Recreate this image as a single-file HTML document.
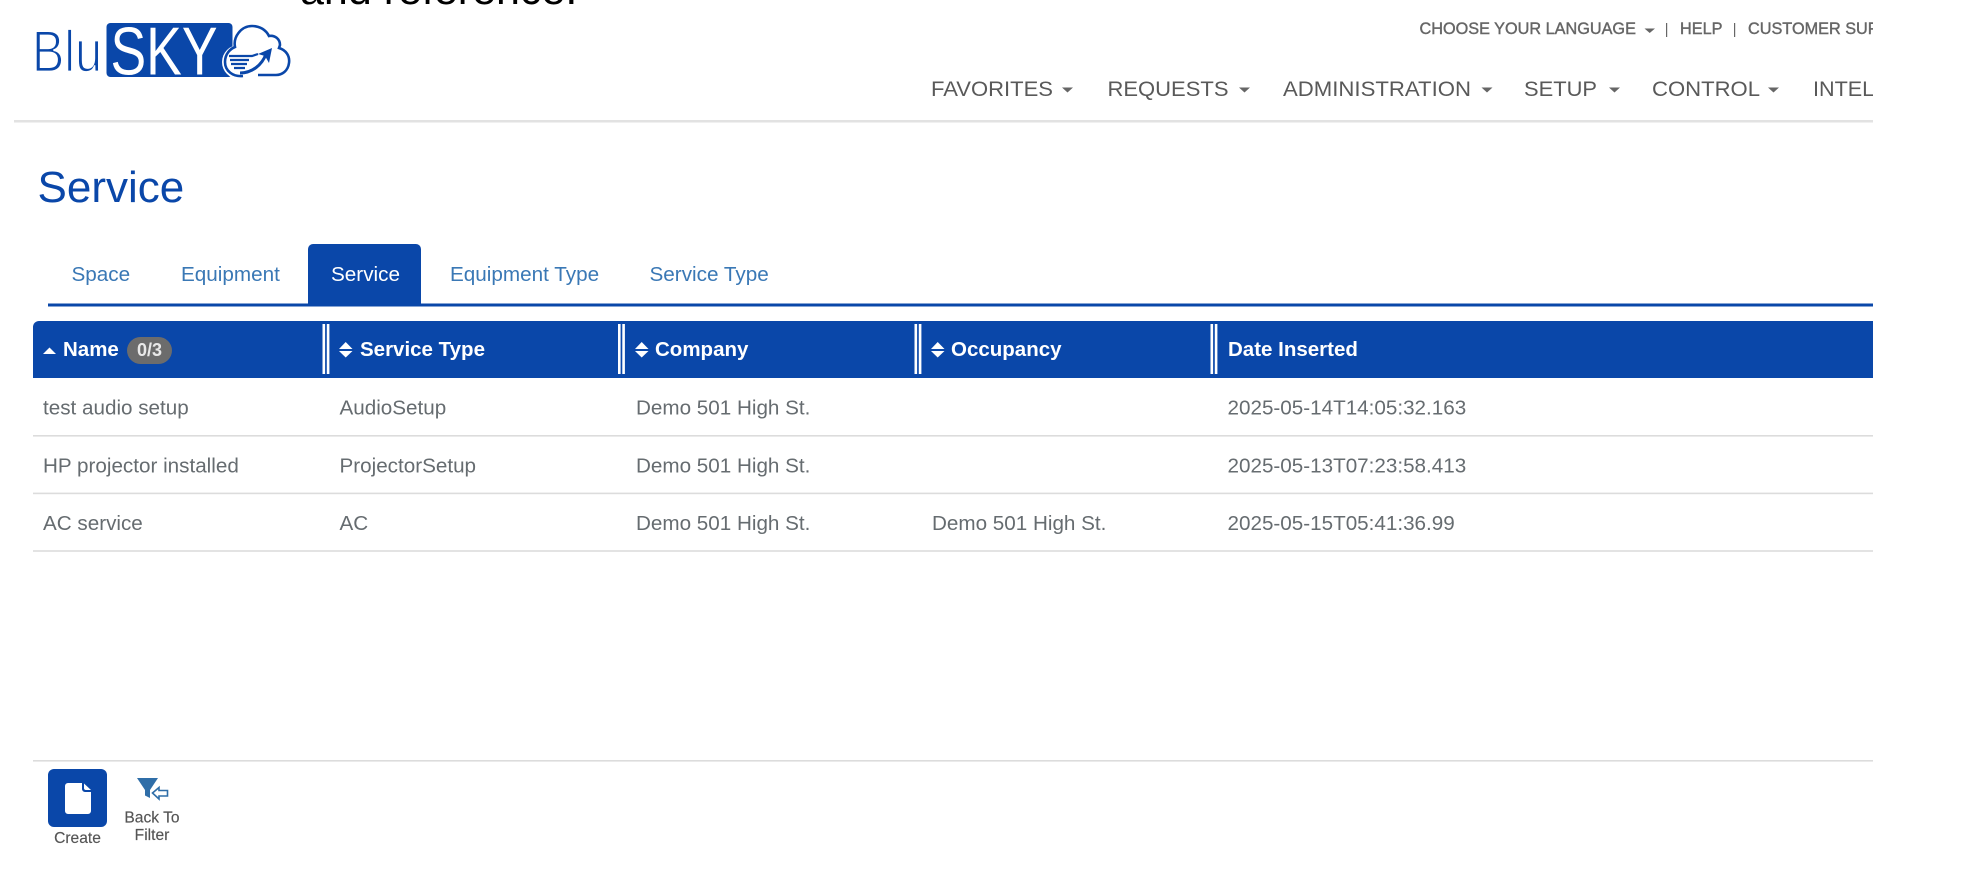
<!DOCTYPE html>
<html lang="en">
<head>
<meta charset="utf-8">
<title>Service</title>
<style>
html,body{margin:0;padding:0;background:#fff;width:1980px;height:892px;overflow:hidden}
svg{display:block;filter:blur(.3px)}
text{font-family:"Liberation Sans",sans-serif}
.nav{font-size:21.6px;fill:#595959}
.top{font-size:16.25px;fill:#666;stroke:#666;stroke-width:.4px}
.tab{font-size:20.7px;fill:#3a78b5}
.th{font-size:20.5px;font-weight:bold;fill:#fff}
.td{font-size:20.65px;fill:#666c70}
.lbl{font-size:15.6px;fill:#555;stroke:#555;stroke-width:.15px;text-anchor:middle}
</style>
</head>
<body>
<svg width="1980" height="892" viewBox="0 0 1980 892" xmlns="http://www.w3.org/2000/svg">
<defs>
<clipPath id="c"><rect x="0" y="0" width="1873" height="892"/></clipPath>
<clipPath id="h"><path d="M39 321H1873V378H33V327a6 6 0 0 1 6-6Z"/></clipPath>
</defs>
<rect width="1980" height="892" fill="#fff"/>

<text x="300" y="4" font-size="43" fill="#000">and reference.</text>

<!-- logo -->
<text x="32" y="71.5" font-size="58" fill="#0a47a9" stroke="#fff" stroke-width="1.7" textLength="70" lengthAdjust="spacingAndGlyphs">Blu</text>
<rect x="106.5" y="23" width="126" height="54" rx="4" fill="#0a47a9"/>
<text x="110.5" y="74.5" font-size="68" fill="#fff" textLength="107" lengthAdjust="spacingAndGlyphs">SKY</text>
<circle cx="239" cy="62" r="17" fill="#fff"/>
<circle cx="251" cy="38" r="16" fill="#fff"/>
<path d="M243 76C233 77 225 71 225 62C225 54 230 49 235 47C233 37 241 26 252 26C260 26 266 30 269 36C275 35 280 39 280 45L279 48C286 50 290 56 289 63C288 71 282 75 276 75H258" fill="none" stroke="#0a47a9" stroke-width="2.6"/>
<path d="M229 56H252L258 54M230 60H249M231 64H247M234 68H245" fill="none" stroke="#0a47a9" stroke-width="2.2"/>
<path d="M240 73C252 73 262 65 266 54" fill="none" stroke="#0a47a9" stroke-width="3"/>
<polygon points="272,48 269,63 265,56 258,54" fill="#0a47a9"/>

<g clip-path="url(#c)">
<!-- top bar -->
<text class="top" x="1419.5" y="34">CHOOSE YOUR LANGUAGE</text>
<polygon points="1644.5,28.5 1655,28.5 1649.7,33" fill="#666"/>
<rect x="1666" y="23" width="1.2" height="14" fill="#666"/>
<text class="top" x="1680" y="34">HELP</text>
<rect x="1734" y="23" width="1.2" height="14" fill="#666"/>
<text class="top" x="1748" y="34">CUSTOMER SUPPORT</text>

<!-- nav -->
<text class="nav" x="931" y="96" textLength="122" lengthAdjust="spacingAndGlyphs">FAVORITES</text>
<polygon points="1062,87.5 1073,87.5 1067.5,92.5" fill="#666"/>
<text class="nav" x="1107.5" y="96" textLength="121" lengthAdjust="spacingAndGlyphs">REQUESTS</text>
<polygon points="1239,87.5 1250,87.5 1244.5,92.5" fill="#666"/>
<text class="nav" x="1283" y="96" textLength="188" lengthAdjust="spacingAndGlyphs">ADMINISTRATION</text>
<polygon points="1481.5,87.5 1492.5,87.5 1487,92.5" fill="#666"/>
<text class="nav" x="1524" y="96" textLength="73" lengthAdjust="spacingAndGlyphs">SETUP</text>
<polygon points="1609,87.5 1620,87.5 1614.5,92.5" fill="#666"/>
<text class="nav" x="1652" y="96" textLength="108" lengthAdjust="spacingAndGlyphs">CONTROL</text>
<polygon points="1768,87.5 1779,87.5 1773.5,92.5" fill="#666"/>
<text class="nav" x="1813" y="96">INTELLIGENCE</text>

<rect x="14" y="120" width="1859" height="2.5" fill="#e2e2e2"/>

<!-- title -->
<text x="37.5" y="202" font-size="44" fill="#0a47a9">Service</text>

<!-- tabs -->
<rect x="48" y="303.5" width="1825" height="3" fill="#0a47a9"/>
<path d="M308 306V249a5 5 0 0 1 5-5H416a5 5 0 0 1 5 5V306Z" fill="#0a47a9"/>
<text class="tab" x="71.5" y="281">Space</text>
<text class="tab" x="181" y="281">Equipment</text>
<text class="tab" x="331" y="281" style="fill:#fff">Service</text>
<text class="tab" x="450" y="281">Equipment Type</text>
<text class="tab" x="649.5" y="281">Service Type</text>

<!-- table header -->
<rect x="33" y="321" width="1840" height="57" fill="#0a47a9" clip-path="url(#h)"/>
<polygon points="43,354 56,354 49.5,347.5" fill="#fff"/>
<text class="th" x="63" y="356">Name</text>
<rect x="127" y="337" width="45" height="27" rx="13.5" fill="#6c6c6c"/>
<text x="137" y="356" font-size="18" font-weight="bold" fill="#e8e8e8">0/3</text>

<g fill="#fff">
<rect x="322.5" y="324" width="2.6" height="50"/><rect x="326.8" y="324" width="2.6" height="50"/>
<rect x="618" y="324" width="2.6" height="50"/><rect x="622.3" y="324" width="2.6" height="50"/>
<rect x="914.5" y="324" width="2.6" height="50"/><rect x="918.8" y="324" width="2.6" height="50"/>
<rect x="1210.5" y="324" width="2.6" height="50"/><rect x="1214.8" y="324" width="2.6" height="50"/>
<polygon points="339,349 352.5,349 345.7,342"/><polygon points="339,351 352.5,351 345.7,357.5"/>
<polygon points="635,349 648.5,349 641.7,342"/><polygon points="635,351 648.5,351 641.7,357.5"/>
<polygon points="931,349 944.5,349 937.7,342"/><polygon points="931,351 944.5,351 937.7,357.5"/>
</g>
<text class="th" x="360" y="356">Service Type</text>
<text class="th" x="655" y="356">Company</text>
<text class="th" x="951" y="356">Occupancy</text>
<text class="th" x="1228" y="356">Date Inserted</text>

<!-- rows -->
<text class="td" x="43" y="414.5">test audio setup</text>
<text class="td" x="339.5" y="414.5">AudioSetup</text>
<text class="td" x="636" y="414.5">Demo 501 High St.</text>
<text class="td" x="1227.5" y="414.5">2025-05-14T14:05:32.163</text>
<rect x="33" y="435" width="1840" height="1.6" fill="#dcdcdc"/>

<text class="td" x="43" y="472.3">HP projector installed</text>
<text class="td" x="339.5" y="472.3">ProjectorSetup</text>
<text class="td" x="636" y="472.3">Demo 501 High St.</text>
<text class="td" x="1227.5" y="472.3">2025-05-13T07:23:58.413</text>
<rect x="33" y="492.6" width="1840" height="1.6" fill="#dcdcdc"/>

<text class="td" x="43" y="530">AC service</text>
<text class="td" x="339.5" y="530">AC</text>
<text class="td" x="636" y="530">Demo 501 High St.</text>
<text class="td" x="932" y="530">Demo 501 High St.</text>
<text class="td" x="1227.5" y="530">2025-05-15T05:41:36.99</text>
<rect x="33" y="550.2" width="1840" height="1.6" fill="#dcdcdc"/>

<!-- footer -->
<rect x="33" y="760" width="1840" height="1.6" fill="#dcdcdc"/>
</g>

<rect x="48" y="769" width="59" height="58" rx="6" fill="#0a47a9"/>
<path d="M68 783H82V789a3 3 0 0 0 3 3H91V811a3 3 0 0 1-3 3H68a3 3 0 0 1-3-3V786a3 3 0 0 1 3-3Z" fill="#fff"/>
<path d="M84 783.5L91 790H86a2 2 0 0 1-2-2Z" fill="#fff"/>
<text class="lbl" x="77.5" y="843">Create</text>

<polygon points="137,778 158,778 150,790 150,798 145,795.5 145,790" fill="#2f6ea8"/>
<path d="M152.5 793L159 787.5V790.5H167.5V796H159V799Z" fill="#fff" stroke="#2f6ea8" stroke-width="1.6"/>
<text class="lbl" x="152" y="822.5">Back To</text>
<text class="lbl" x="152" y="840">Filter</text>
</svg>
</body>
</html>
